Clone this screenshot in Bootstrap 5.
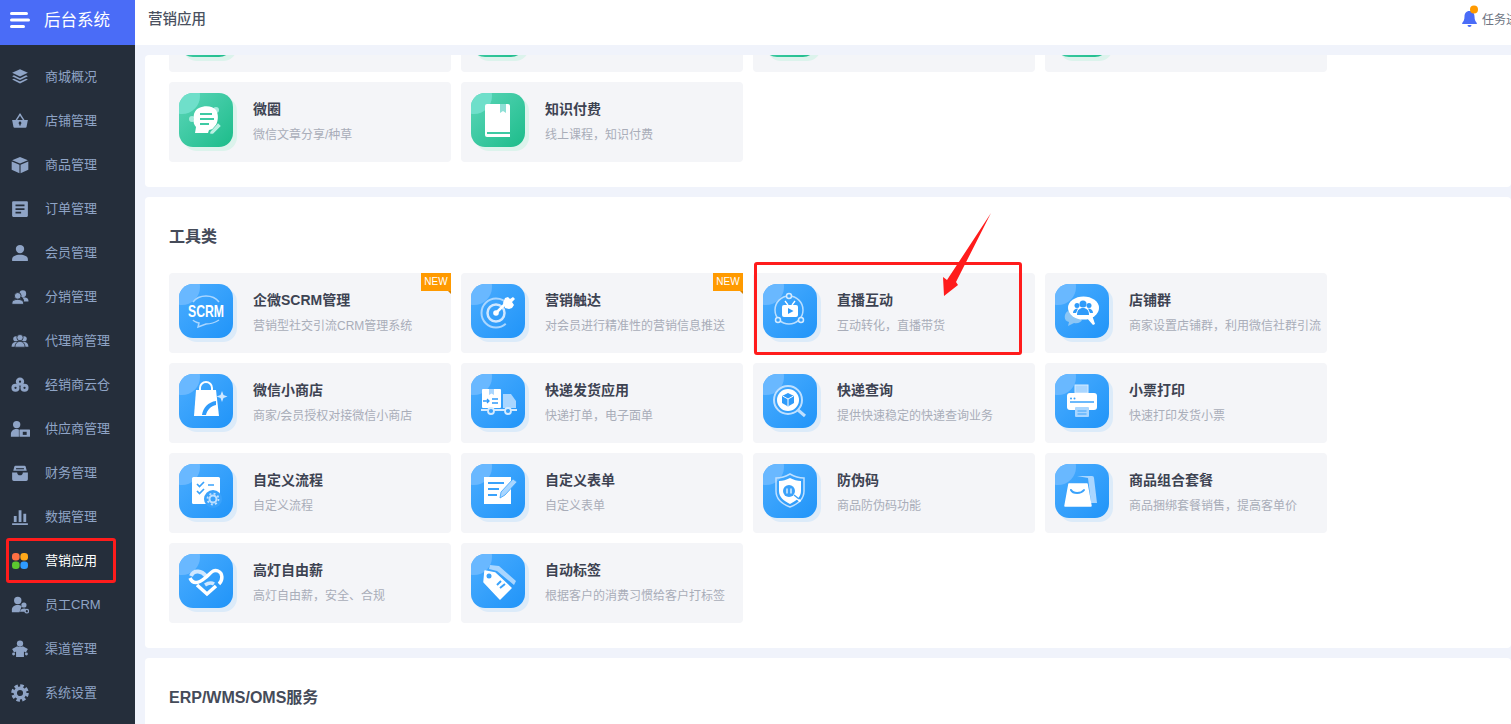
<!DOCTYPE html>
<html lang="zh-CN">
<head>
<meta charset="UTF-8">
<title>营销应用</title>
<link href="https://cdn.jsdelivr.net/npm/bootstrap@5.3.0/dist/css/bootstrap.min.css" rel="stylesheet">
<style>
  body {
    font-family: "Liberation Sans", "Noto Sans CJK SC", sans-serif;
    background-color: #f0f3fb;
    height: 724px;
    overflow: hidden;
  }
  /* sidebar */
  .side-bar { width: 135px; background-color: #252e3b; }
  .side-head { height: 45px; background-color: #4a6cf7; color: #fff; font-size: 16.5px; padding: 0 0 5px 10px; gap: 14px; }
  .side-list { padding-top: 10px; }
  .side-item { height: 44px; padding-left: 11px; gap: 16px; color: #8fa4c6; font-size: 13px; }
  .side-item svg { width: 18px; height: 18px; fill: #8fa4c6; flex-shrink: 0; }
  .side-item.is-active { color: #fff; }
  .side-item svg.is-wide { width: 20px; margin: 0 -1px 0 -1px; }
  /* top bar */
  .top-bar { height: 45px; background-color: #fff; padding: 0 0 5px 13px; color: #4a5160; font-size: 14.5px; font-weight: 500; }
  .task-box { font-size: 12px; font-weight: 400; line-height: 18px; color: #6d7482; width: 50px; height: 40px; flex-shrink: 0; align-self: flex-start; margin-left: auto; white-space: nowrap; overflow: hidden; gap: 4px; }
  .task-box svg { flex-shrink: 0; margin-top: 5px; }
  .task-box span { margin-top: 11px; }
  /* content */
  .page-scroll { margin: 10px 0 0 10px; border-top-left-radius: 4px; }
  .block-sec { background-color: #fff; border-radius: 4px; padding: 31px 24px 25px; margin-bottom: 10px; }
  .block-sec.is-cut { margin-top: -63px; padding-top: 0; }
  .block-title { font-size: 16px; font-weight: 700; line-height: 18px; color: #454b59; margin-bottom: 27px; }
  .app-grid { display: grid; grid-template-columns: repeat(4, 282px); gap: 10px; }
  .app-card { height: 80px; background-color: #f4f5f8; border-radius: 4px; padding: 11px 0 0 10px; gap: 20px; }
  .app-tile { width: 54px; height: 54px; border-radius: 14px; overflow: hidden; flex-shrink: 0; background: linear-gradient(135deg, #4badff, #2094f8); box-shadow: 4px 4px 0 #dcebf9; }
  .app-tile::before { content: ""; position: absolute; left: -15px; top: -15px; width: 36px; height: 36px; border-radius: 50%; background-color: #69b8ff; }
  .app-tile.is-green { background: linear-gradient(135deg, #5cd6b9, #1cbc8a); box-shadow: 4px 4px 0 #dcf3ec; }
  .app-tile.is-green::before { background-color: #6fdfca; }
  .app-tile svg { position: relative; display: block; width: 54px; height: 54px; }
  .app-name { font-size: 14px; font-weight: 700; color: #3d4352; line-height: 18px; margin-top: 7px; }
  .app-desc { font-size: 12px; color: #a9adb9; line-height: 16px; margin-top: 9px; white-space: nowrap; }
  .new-tag { position: absolute; top: 0; right: 0; width: 30px; height: 18px; background-color: #ff9a00; color: #fff; font-size: 10px; line-height: 18px; text-align: center; }
  .new-tag::after { content: ""; position: absolute; right: 0; top: 18px; border-top: 3px solid #d98300; border-left: 3px solid transparent; }
  /* hand-drawn annotations on top of the screenshot */
  .mark-box { position: absolute; border: 3px solid #ff1c1c; border-radius: 3px; }
  .mark-side { left: 6px; top: 538px; width: 110px; height: 45px; }
  .mark-card { left: 754px; top: 262px; width: 268px; height: 93px; }
  .mark-arrow { position: absolute; left: 930px; top: 205px; }
</style>
</head>
<body>

<div class="d-flex vh-100 overflow-hidden">
  <div class="side-bar flex-shrink-0">
    <div class="side-head d-flex align-items-center">
      <svg width="20" height="18" viewBox="0 0 20 18" fill="#fff"><rect y="1" width="18" height="3" rx="1.5"/><rect y="7.5" width="20" height="3" rx="1.5"/><rect y="14" width="15" height="3" rx="1.5"/></svg>
      <span>后台系统</span>
    </div>
    <div class="side-list">
      <div class="side-item d-flex align-items-center"><svg viewBox="0 0 16 16"><path d="M8 1l7 3.300L8 7.600 1 4.300z"/><path d="M2.600 6.500L8 9l5.400-2.500L15 7.300l-7 3.300-7-3.300z"/><path d="M2.600 9.500L8 12l5.400-2.500 1.600.8-7 3.400-7-3.400z"/></svg><span>商城概况</span></div>
      <div class="side-item d-flex align-items-center"><svg viewBox="0 0 16 16"><path fill-rule="evenodd" d="M1 7h3l3-4.600a1 1 0 0 1 2 0L12 7h3l-1.200 6.300a1 1 0 0 1-1 .7H3.200a1 1 0 0 1-1-.7zM5.500 7h5L8 3.400zM8 8.500a1.300 1.300 0 0 0-.6 2.400V12h1.200v-1.100A1.300 1.300 0 0 0 8 8.500z"/></svg><span>店铺管理</span></div>
      <div class="side-item d-flex align-items-center"><svg viewBox="0 0 16 16"><path d="M8 .8l7 2.900L8 6.700 1 3.700z"/><path d="M.6 4.800l6.900 3v7.600L.6 12.300z"/><path d="M15.400 4.800l-6.900 3v7.600l6.900-3.100z"/></svg><span>商品管理</span></div>
      <div class="side-item d-flex align-items-center"><svg viewBox="0 0 16 16"><path fill-rule="evenodd" d="M2 1h12a1 1 0 0 1 1 1v12a1 1 0 0 1-1 1H2a1 1 0 0 1-1-1V2a1 1 0 0 1 1-1zm2 3v1.500h8V4zm0 3.300v1.500h8V7.300zm0 3.200V12h5v-1.500z"/></svg><span>订单管理</span></div>
      <div class="side-item d-flex align-items-center"><svg viewBox="0 0 16 16"><circle cx="8" cy="4.500" r="3.700"/><path d="M1 15v-1.500C1 11 4 9.500 8 9.500s7 1.500 7 4V15z"/></svg><span>会员管理</span></div>
      <div class="side-item d-flex align-items-center"><svg viewBox="0 0 16 16"><circle cx="10.500" cy="5" r="3"/><path d="M15.500 12v-1c0-1.800-2-2.800-4.500-2.800-.5 0-1 0-1.400.1 1.300.8 2 2 2 3.700z"/><circle cx="6" cy="7" r="3" stroke="#252e3b" stroke-width=".8"/><path d="M.8 14.500v-1.200c0-2 2.300-3.200 5.200-3.200s5.200 1.200 5.200 3.200v1.200z" stroke="#252e3b" stroke-width=".8"/></svg><span>分销管理</span></div>
      <div class="side-item d-flex align-items-center"><svg viewBox="0 0 16 16"><circle cx="4.300" cy="6" r="2.300"/><circle cx="11.700" cy="6" r="2.300"/><path d="M.5 13c0-2.500 1.500-4.200 3.800-4.200s3.700 1.700 3.700 4.200zM8 13c0-2.500 1.400-4.200 3.700-4.200s3.800 1.700 3.800 4.200z"/><circle cx="8" cy="5" r="2.800" stroke="#252e3b" stroke-width=".7"/><path d="M3.500 13.500c0-3 1.800-5.200 4.500-5.200s4.500 2.200 4.500 5.200z" stroke="#252e3b" stroke-width=".7"/></svg><span>代理商管理</span></div>
      <div class="side-item d-flex align-items-center"><svg viewBox="0 0 16 16"><circle cx="8" cy="5" r="3.700"/><circle cx="4" cy="10.500" r="3.600"/><circle cx="12" cy="10.500" r="3.600"/><circle cx="4" cy="10.500" r="1" fill="#252e3b"/><circle cx="12" cy="10.500" r="1" fill="#252e3b"/><circle cx="8" cy="5" r="1" fill="#252e3b"/></svg><span>经销商云仓</span></div>
      <div class="side-item d-flex align-items-center"><svg class="is-wide" viewBox="0 0 18 16"><circle cx="6" cy="4" r="3.300"/><path d="M.8 15v-2.500C.8 10 3 8 5.500 8c1.500 0 2.500.5 2.500.5V15z"/><path d="M9 8.500h8.500a.5.500 0 0 1 .5.500v5.500a.5.500 0 0 1-.5.500H9a.5.500 0 0 1-.5-.5V9a.5.500 0 0 1 .5-.5z"/><path d="M11.500 10.500h3.500v2.800h-3.500z" fill="#252e3b"/></svg><span>供应商管理</span></div>
      <div class="side-item d-flex align-items-center"><svg viewBox="0 0 16 16"><path d="M4 1.500h8a1 1 0 0 1 1 .8L14 6H2l1-3.700a1 1 0 0 1 1-.8z"/><path d="M1 7.500h4.500a2.500 2.500 0 0 0 5 0H15v6a1.500 1.500 0 0 1-1.500 1.500h-11A1.500 1.500 0 0 1 1 13.500z"/><path d="M4.500 3.700h7v1h-7z" fill="#252e3b"/></svg><span>财务管理</span></div>
      <div class="side-item d-flex align-items-center"><svg viewBox="0 0 16 16"><path d="M1 13.500h14V15H1zM2.500 7h2.500v5.500H2.500zM6.800 2h2.500v10.500H6.800zM11 5h2.500v7.500H11z"/></svg><span>数据管理</span></div>
      <div class="side-item is-active d-flex align-items-center"><svg viewBox="-1 -1 18 18"><rect width="7.600" height="7.600" rx="3.300" fill="#ff7043"/><rect x="8.400" width="7.600" height="7.600" rx="3.300" fill="#ffa91a"/><rect y="8.400" width="7.600" height="7.600" rx="3.300" fill="#5cc72f"/><rect x="8.400" y="8.400" width="7.600" height="7.600" rx="3.300" fill="#2f9bff"/></svg><span>营销应用</span></div>
      <div class="side-item d-flex align-items-center"><svg viewBox="0 0 16 16"><circle cx="6" cy="4" r="3.300"/><path d="M.8 14.500V12c0-2.400 2.300-4 5.200-4 1.500 0 2.700.4 3.500 1l-2 5.500z"/><circle cx="11.500" cy="8" r="2.300"/><path d="M8 14c0-1.800 1.500-3 3.500-3 .6 0 1.100.1 1.500.3V14z"/><circle cx="14" cy="13.500" r="1.600" fill="none" stroke="#8fa4c6" stroke-width="1.100"/></svg><span>员工CRM</span></div>
      <div class="side-item d-flex align-items-center"><svg viewBox="0 0 16 16"><circle cx="8" cy="3.200" r="2.800"/><path d="M5.500 5.500c1.500 1 3.500 1 5 0l4.500 2.500-1.800 3-1.700-.7V15H4.500v-4.700L2.800 11 1 8z"/><circle cx="2.300" cy="12.500" r="1.300"/><circle cx="13.700" cy="12.500" r="1.300"/></svg><span>渠道管理</span></div>
      <div class="side-item d-flex align-items-center"><svg viewBox="0 0 16 16"><circle cx="8" cy="8" r="4.200" fill="none" stroke="#8fa4c6" stroke-width="3"/><circle cx="8" cy="8" r="6.500" fill="none" stroke="#8fa4c6" stroke-width="2.600" stroke-dasharray="3.100 2"/></svg><span>系统设置</span></div>
    </div>
  </div>

  <div class="flex-grow-1 d-flex flex-column" style="min-width:0">
    <div class="top-bar d-flex align-items-center flex-shrink-0">
      <span>营销应用</span>
      <div class="task-box d-flex">
        <svg width="17" height="24" viewBox="0 0 17 24"><path d="M8.500 6C5 6 3.500 8.500 3.500 11.500c0 3.500-1 5-2.300 6.500v1h14.600v-1c-1.300-1.500-2.300-3-2.300-6.500C13.500 8.500 12 6 8.500 6z" fill="#4a6cf7"/><path d="M6.500 20h4a2 2 0 0 1-4 0z" fill="#4a6cf7"/><circle cx="13" cy="4.500" r="4" fill="#ff9a00"/></svg>
        <span>任务进度</span>
      </div>
    </div>

    <div class="page-scroll flex-grow-1 overflow-hidden">
      <div class="block-sec is-cut">
        <div class="app-grid">
          <div class="app-card d-flex"><div class="app-tile is-green position-relative"></div></div>
          <div class="app-card d-flex"><div class="app-tile is-green position-relative"></div></div>
          <div class="app-card d-flex"><div class="app-tile is-green position-relative"></div></div>
          <div class="app-card d-flex"><div class="app-tile is-green position-relative"></div></div>
          <div class="app-card d-flex">
            <div class="app-tile is-green position-relative"><svg viewBox="0 0 54 54"><circle cx="13" cy="26" r="3" fill="#a5ebdc"/><circle cx="37" cy="17" r="3" fill="#a5ebdc"/><path d="M20 15c6-3 14-2 17 2 3 5 2 11 0 15l-3 4-4 1-1 3H16l1-6c-2-2-3-5-2-8-1-5 1-9 5-11z" fill="#fff"/><path d="M21 21h12M21 26h14M21 31h9" stroke="#3ecaa4" stroke-width="2"/><path d="M31 39l8-9 3 3-8 8h-3z" fill="#bdf0e3" stroke="#3ecaa4" stroke-width=".6"/></svg></div>
            <div><div class="app-name">微圈</div><div class="app-desc">微信文章分享/种草</div></div>
          </div>
          <div class="app-card d-flex">
            <div class="app-tile is-green position-relative"><svg viewBox="0 0 54 54"><path d="M16 11h21a2 2 0 0 1 2 2v31H16a2 2 0 0 1-2-2V13a2 2 0 0 1 2-2z" fill="#fff"/><path d="M29 11h6v9l-3-2-3 2z" fill="#8fe0d6"/><path d="M16 40h23" stroke="#3ecaa4" stroke-width="2"/></svg></div>
            <div><div class="app-name">知识付费</div><div class="app-desc">线上课程，知识付费</div></div>
          </div>
        </div>
      </div>

      <div class="block-sec">
        <div class="block-title">工具类</div>
        <div class="app-grid">
          <div class="app-card d-flex position-relative">
            <div class="app-tile position-relative"><svg viewBox="0 0 54 54"><path d="M14 18c3-4 8-6 13-6s10 2 13 6M40 36c-3 2-8 4-13 4l-8 3 1-4c-3-1-5-1-6-3" fill="none" stroke="#a9d6ff" stroke-width="1.500"/><text x="27" y="33" text-anchor="middle" fill="#fff" font-family="Liberation Sans" font-weight="700" font-size="17" textLength="36" lengthAdjust="spacingAndGlyphs">SCRM</text></svg></div>
            <div><div class="app-name">企微SCRM管理</div><div class="app-desc">营销型社交引流CRM管理系统</div></div>
            <span class="new-tag">NEW</span>
          </div>
          <div class="app-card d-flex position-relative">
            <div class="app-tile position-relative"><svg viewBox="0 0 54 54"><circle cx="25" cy="29" r="14.500" fill="none" stroke="#a9d6ff" stroke-width="2" stroke-dasharray="70 21" stroke-dashoffset="-12"/><circle cx="25" cy="29" r="8.500" fill="none" stroke="#cfe7ff" stroke-width="2.500"/><circle cx="25" cy="29" r="2.800" fill="#fff"/><path d="M25 29l11-11" stroke="#fff" stroke-width="2.500"/><path d="M32 19l2-5 3-1 2 2 3-2 2 2-3 3 2 3-2 3-3 1-4-1z" fill="#fff"/></svg></div>
            <div><div class="app-name">营销触达</div><div class="app-desc">对会员进行精准性的营销信息推送</div></div>
            <span class="new-tag">NEW</span>
          </div>
          <div class="app-card d-flex">
            <div class="app-tile position-relative"><svg viewBox="0 0 54 54"><circle cx="26" cy="26" r="14" fill="none" stroke="#b9deff" stroke-width="1.500"/><circle cx="26" cy="12" r="2.500" fill="#3aa2fb" stroke="#d5ebff" stroke-width="1.500"/><circle cx="15" cy="36" r="2.500" fill="#3aa2fb" stroke="#d5ebff" stroke-width="1.500"/><circle cx="38" cy="36" r="2.500" fill="#3aa2fb" stroke="#d5ebff" stroke-width="1.500"/><rect x="19" y="21" width="16" height="12" rx="2" fill="#fff"/><path d="M22 17l3 4M32 17l-3 4" stroke="#fff" stroke-width="1.300"/><path d="M25 24l5.500 3-5.500 3z" fill="#2f9bfa"/></svg></div>
            <div><div class="app-name">直播互动</div><div class="app-desc">互动转化，直播带货</div></div>
          </div>
          <div class="app-card d-flex">
            <div class="app-tile position-relative"><svg viewBox="0 0 54 54"><path d="M13 27c-4 2-5 10 1 11l-1 4 6-3c4 1 7-1 8-3z" fill="#8cc6f5"/><ellipse cx="28.500" cy="24" rx="15.500" ry="11.500" fill="#fff"/><path d="M31 33l7 8 2-1-3-9z" fill="#fff"/><circle cx="28" cy="20" r="3.500" fill="#2f9bfa"/><path d="M22 31c0-5 2.500-7 6-7s6 2 6 7z" fill="#2f9bfa"/><circle cx="22" cy="21.500" r="2.500" fill="#2f9bfa"/><circle cx="34" cy="21.500" r="2.500" fill="#2f9bfa"/><path d="M18 29c0-3 2-4.500 5-4.500l-2 4.500zM38 29c0-3-2-4.500-5-4.500l2 4.500z" fill="#2f9bfa"/></svg></div>
            <div><div class="app-name">店铺群</div><div class="app-desc">商家设置店铺群，利用微信社群引流</div></div>
          </div>

          <div class="app-card d-flex">
            <div class="app-tile position-relative"><svg viewBox="0 0 54 54"><path d="M21 17v-3a6 6 0 0 1 12 0v3" fill="none" stroke="#fff" stroke-width="2"/><path d="M17 16h20l3 26H15z" fill="#fff"/><path d="M23 41c1-7 6-13 14-14v4c-5 1-9 5-10 10z" fill="#2f9bfa"/><path d="M43 17l1.500 4 4 1.500-4 1.500-1.500 4-1.500-4-4-1.500 4-1.500z" fill="#cfe7ff"/></svg></div>
            <div><div class="app-name">微信小商店</div><div class="app-desc">商家/会员授权对接微信小商店</div></div>
          </div>
          <div class="app-card d-flex">
            <div class="app-tile position-relative"><svg viewBox="0 0 54 54"><rect x="11" y="15" width="19" height="19" rx="1" fill="#fff"/><path d="M18 15h5v6l-2.500-1.500L18 21z" fill="#a9d6ff"/><path d="M12 27h6m-2-2l2 2-2 2M21 25h6M21 29h6" stroke="#2f9bfa" stroke-width="1.300" fill="none"/><path d="M32 20h8l5 7v7H32z" fill="#a9d6ff"/><path d="M10 36h36" stroke="#d5ebff" stroke-width="2"/><circle cx="20" cy="37" r="3" fill="#3aa2fb" stroke="#d5ebff" stroke-width="1.800"/><circle cx="37" cy="37" r="3" fill="#3aa2fb" stroke="#d5ebff" stroke-width="1.800"/></svg></div>
            <div><div class="app-name">快递发货应用</div><div class="app-desc">快递打单，电子面单</div></div>
          </div>
          <div class="app-card d-flex">
            <div class="app-tile position-relative"><svg viewBox="0 0 54 54"><path d="M35 36l7 6" stroke="#bfe0ff" stroke-width="3"/><circle cx="25" cy="26" r="14" fill="none" stroke="#bfe0ff" stroke-width="2"/><circle cx="25" cy="26" r="11" fill="#fff"/><path d="M25 19l6 3v7l-6 3.500-6-3.500v-7z" fill="#2f9bfa"/><path d="M19.500 22l5.500 3 5.500-3M25 25v7" stroke="#fff" stroke-width="1" fill="none"/></svg></div>
            <div><div class="app-name">快递查询</div><div class="app-desc">提供快速稳定的快递查询业务</div></div>
          </div>
          <div class="app-card d-flex">
            <div class="app-tile position-relative"><svg viewBox="0 0 54 54"><rect x="20" y="11" width="13" height="8" fill="#a9d6ff" stroke="#d5ebff" stroke-width="1"/><rect x="12" y="19" width="30" height="17" rx="3" fill="#fff"/><path d="M15 28h24" stroke="#3aa2fb" stroke-width="1.500"/><circle cx="16" cy="24.500" r="1" fill="#3aa2fb"/><circle cx="19.500" cy="24.500" r="1" fill="#3aa2fb"/><rect x="20" y="33" width="14" height="10" rx="1" fill="#a9d6ff"/><path d="M22.500 37h9M22.500 40h9" stroke="#3aa2fb" stroke-width="1"/></svg></div>
            <div><div class="app-name">小票打印</div><div class="app-desc">快速打印发货小票</div></div>
          </div>

          <div class="app-card d-flex">
            <div class="app-tile position-relative"><svg viewBox="0 0 54 54"><rect x="13" y="13" width="28" height="27" rx="1.500" fill="#fff"/><path d="M18 20l2.500 2.500L25 18M18 27l2.500 2.500L25 25M29 21h6" fill="none" stroke="#3aa2fb" stroke-width="1.700"/><circle cx="34" cy="35" r="9" fill="#3aa2fb"/><circle cx="34" cy="35" r="3.500" fill="none" stroke="#bfe0ff" stroke-width="2"/><circle cx="34" cy="35" r="5.500" fill="none" stroke="#bfe0ff" stroke-width="1.800" stroke-dasharray="2 2.300"/></svg></div>
            <div><div class="app-name">自定义流程</div><div class="app-desc">自定义流程</div></div>
          </div>
          <div class="app-card d-flex">
            <div class="app-tile position-relative"><svg viewBox="0 0 54 54"><rect x="13" y="13" width="27" height="27" fill="#fff"/><path d="M17 19h16M17 25h11M17 31h9" stroke="#3aa2fb" stroke-width="2.200"/><path d="M29 34l1-6 12-13 4 3-12 13z" fill="#a9d6ff" stroke="#3aa2fb" stroke-width=".8"/></svg></div>
            <div><div class="app-name">自定义表单</div><div class="app-desc">自定义表单</div></div>
          </div>
          <div class="app-card d-flex">
            <div class="app-tile position-relative"><svg viewBox="0 0 54 54"><path d="M27 10c5 3 9 4 14 4v13c0 8-6 13-14 16-8-3-14-8-14-16V14c5 0 9-1 14-4z" fill="none" stroke="#bfe0ff" stroke-width="1.500"/><path d="M27 14c4 2 7 3 11 3v10c0 6-5 10-11 13-6-3-11-7-11-13V17c4 0 7-1 11-3z" fill="#fff"/><circle cx="26" cy="27" r="6" fill="#3aa2fb"/><path d="M24 24.500v5M28 24.500v5" stroke="#fff" stroke-width="1.200"/><path d="M30.500 31.500l7 6" stroke="#fff" stroke-width="2"/><path d="M31 31l5 4" stroke="#3aa2fb" stroke-width="1.500"/></svg></div>
            <div><div class="app-name">防伪码</div><div class="app-desc">商品防伪码功能</div></div>
          </div>
          <div class="app-card d-flex">
            <div class="app-tile position-relative"><svg viewBox="0 0 54 54"><path d="M22 12h15a2 2 0 0 1 2 2l3 25h-6l-3-25z" fill="#a9d6ff"/><path d="M14 20h18l4 22H10z" fill="#fff" stroke="#fff" stroke-linejoin="round" stroke-width="1.500"/><path d="M16 26c2 4 10 4 13 0" fill="none" stroke="#3aa2fb" stroke-width="2" stroke-linecap="round"/></svg></div>
            <div><div class="app-name">商品组合套餐</div><div class="app-desc">商品捆绑套餐销售，提高客单价</div></div>
          </div>

          <div class="app-card d-flex">
            <div class="app-tile position-relative"><svg viewBox="0 0 54 54"><path d="M12 22c3-7 11-5 15 0" fill="none" stroke="#cfe7ff" stroke-width="4"/><path d="M11 24c3 7 9 5 15 0s8-9 13-7 5 9 1 13" fill="none" stroke="#fff" stroke-width="3.500"/><path d="M18 31l10 9 9-8" fill="none" stroke="#fff" stroke-width="3.500"/><path d="M26 31c3-2 6-3 9-1" fill="none" stroke="#cfe7ff" stroke-width="3.500"/></svg></div>
            <div><div class="app-name">高灯自由薪</div><div class="app-desc">高灯自由薪，安全、合规</div></div>
          </div>
          <div class="app-card d-flex">
            <div class="app-tile position-relative"><svg viewBox="0 0 54 54"><path d="M19 11l9 1 17 15-2 4-17-14-8-2z" fill="#a9d6ff"/><path d="M14 17l10 2 16 15-11 11-16-17z" fill="#fff" stroke="#fff" stroke-width="1.500" stroke-linejoin="round"/><circle cx="18" cy="22" r="2.500" fill="#3aa2fb"/><path d="M29 34l5-4M26 31l4-4" stroke="#3aa2fb" stroke-width="2"/></svg></div>
            <div><div class="app-name">自动标签</div><div class="app-desc">根据客户的消费习惯给客户打标签</div></div>
          </div>
        </div>
      </div>

      <div class="block-sec">
        <div class="block-title">ERP/WMS/OMS服务</div>
      </div>
    </div>
  </div>
</div>

<div class="mark-box mark-side"></div>
<div class="mark-box mark-card"></div>
<svg class="mark-arrow" width="70" height="100" viewBox="930 205 70 100"><polygon points="991,213 956,282 958,285 944,296 943,277 947,280" fill="#ff1c1c"/></svg>

<script src="https://cdn.jsdelivr.net/npm/bootstrap@5.3.0/dist/js/bootstrap.bundle.min.js"></script>
</body>
</html>
